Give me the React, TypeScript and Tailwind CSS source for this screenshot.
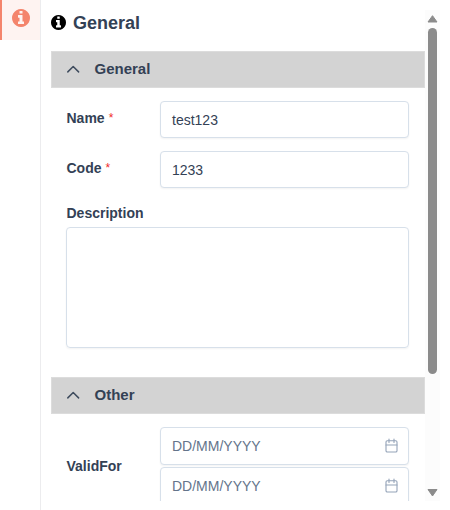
function InfoIcon({ size, color }: { size: number; color: string }) {
  return (
    <svg className="shrink-0" width={size} height={size} viewBox="0 128 1536 1536" fill={color}>
      <path d="M1024 1376v-160q0-14-9-23t-23-9h-96v-512q0-14-9-23t-23-9h-320q-14 0-23 9t-9 23v160q0 14 9 23t23 9h96v320h-96q-14 0-23 9t-9 23v160q0 14 9 23t23 9h448q14 0 23-9t9-23zm-128-896v-160q0-14-9-23t-23-9h-192q-14 0-23 9t-9 23v160q0 14 9 23t23 9h192q14 0 23-9t9-23zm640 416q0 209-103 385.5t-279.5 279.5-385.5 103-385.5-103-279.5-279.5-103-385.5 103-385.5 279.5-279.5 385.5-103 385.5 103 279.5 279.5 103 385.5z" />
    </svg>
  );
}

function Chevron() {
  return (
    <svg width="14" height="14" viewBox="0 0 14 14" fill="none" stroke="#3f4c5e" strokeWidth="1.5" strokeLinecap="round" strokeLinejoin="round">
      <path d="M1.8 9.9 7.2 4.5l5.4 5.4" />
    </svg>
  );
}

function CalendarIcon() {
  return (
    <svg width="14" height="16" viewBox="0 0 14 16" fill="none" stroke="#94a3b8" strokeWidth="1.1" strokeLinecap="round">
      <rect x="1" y="2.7" width="11" height="11.3" rx="1.3" />
      <path d="M1 7h11M4 1v3.4M9 1v3.4" />
    </svg>
  );
}

function SectionHeader({ title }: { title: string }) {
  return (
    <div className="flex h-[37px] shrink-0 items-center border border-[#dcdcdc] bg-[#d3d3d3] pb-[2px] pl-[14px]">
      <Chevron />
      <h2 className="ml-[14.5px] text-[15px] leading-5 font-bold">{title}</h2>
    </div>
  );
}

function Label({ text, required = false }: { text: string; required?: boolean }) {
  return (
    <label className="flex w-[94px] shrink-0 pl-[0.5px] text-sm leading-5 font-bold">
      {text}
      {required && <span className="ml-[4px] text-[12px] leading-5 font-normal text-[#f02a2a]">*</span>}
    </label>
  );
}

const fieldBox =
  "flex w-[249px] shrink-0 items-center rounded border border-[#d7e0ea] bg-white pr-[9px] pl-[11px] text-sm shadow-[0_1px_2px_rgba(18,18,23,0.05)]";

function TextField({ label, value }: { label: string; value: string }) {
  return (
    <div className="flex h-[37px] items-center">
      <div className="-mt-[3px]">
        <Label text={label} required />
      </div>
      <div className={`${fieldBox} h-[37px]`}>{value}</div>
    </div>
  );
}

function DateField() {
  return (
    <div className={`${fieldBox} h-[38px]`}>
      <span className="grow text-[#64748b]">DD/MM/YYYY</span>
      <CalendarIcon />
    </div>
  );
}

function Scrollbar() {
  return (
    <div className="flex w-[15px] shrink-0 flex-col items-center bg-[#fcfcfc]">
      <svg className="mt-[4px] shrink-0" width="11" height="9" viewBox="0 0 11 9" fill="#8b8b8b">
        <path d="M5.5 1.7 10 8H1Z" stroke="#8b8b8b" strokeWidth="1" strokeLinejoin="round" />
      </svg>
      <div className="mt-[5px] h-[346px] w-[9px] shrink-0 rounded-full bg-[#8b8b8b]" />
      <div className="grow" />
      <svg className="mb-[4px] shrink-0" width="11" height="9" viewBox="0 0 11 9" fill="#8b8b8b">
        <path d="M1 1.5h9L5.5 8Z" stroke="#8b8b8b" strokeWidth="1" strokeLinejoin="round" />
      </svg>
    </div>
  );
}

export default function App() {
  return (
    <div className="flex h-[510px] w-[450px] overflow-hidden bg-white font-['Liberation_Sans',Arial,sans-serif] text-[#334155]">
      <nav className="w-[41px] shrink-0 border-r border-[#ececee]">
        <div className="flex h-10 items-center justify-center border-l-2 border-[#f4846c] bg-[#fef3f1] pb-[4px]">
          <InfoIcon size={18} color="#f4846c" />
        </div>
      </nav>
      <main className="mt-[10px] flex h-[491px] w-[399px] overflow-hidden">
        <div className="flex w-[384px] shrink-0 flex-col pl-[10px]">
          <div className="flex h-[41px] shrink-0 items-start">
            <div className="mt-[5px]">
              <InfoIcon size={15} color="#000" />
            </div>
            <h1 className="ml-[7px] text-lg leading-[26px] font-bold">General</h1>
          </div>
          <SectionHeader title="General" />
          <div className="flex h-[289px] shrink-0 flex-col px-[15px] pt-[13px]">
            <TextField label="Name" value="test123" />
            <div className="h-[13px]" />
            <TextField label="Code" value="1233" />
            <div className="mt-[15px] flex h-[24px] items-start">
              <Label text="Description" />
            </div>
            <div className="h-[121px] w-[343px] rounded border border-[#d7e0ea] shadow-[0_1px_2px_rgba(18,18,23,0.05)]" />
          </div>
          <SectionHeader title="Other" />
          <div className="flex shrink-0 items-center px-[15px] pt-[13px]">
            <Label text="ValidFor" />
            <div className="flex flex-col gap-[2px]">
              <DateField />
              <DateField />
            </div>
          </div>
        </div>
        <Scrollbar />
      </main>
    </div>
  );
}
